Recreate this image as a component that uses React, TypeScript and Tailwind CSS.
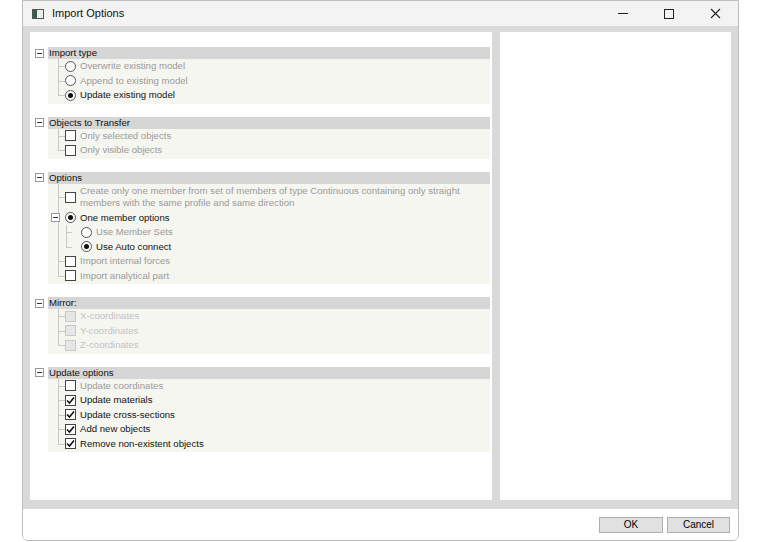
import React from "react";

type Item = { label: string; kind: "radio" | "check"; on?: boolean; dim?: boolean; disabled?: boolean; lines?: number; level?: number };

function Mark({ kind, on, disabled }: { kind: string; on?: boolean; disabled?: boolean }) {
  if (kind === "radio")
    return (
      <span className="w-[11px] h-[11px] rounded-full border border-[#555] bg-white flex items-center justify-center shrink-0">
        {on && <span className="w-[5px] h-[5px] rounded-full bg-[#111]" />}
      </span>
    );
  return (
    <span className={`w-[11px] h-[11px] border flex items-center justify-center shrink-0 ${disabled ? "border-[#c8c8c8] bg-[#e6e6e6]" : "border-[#444] bg-white"}`}>
      {on && (
        <svg width="9" height="9" viewBox="0 0 9 9">
          <path d="M1 4.5 L3.5 7 L8 1.5" stroke="#111" strokeWidth="1.6" fill="none" />
        </svg>
      )}
    </span>
  );
}

function Row({ it, last }: { it: Item; last: boolean }) {
  const lvl = it.level ?? 0;
  const h = it.lines === 2 ? "h-[27px]" : "h-[14.5px]";
  return (
    <div className={`flex ${h}`}>
      <div className="w-[7px] ml-[10px] shrink-0 relative">
        <div className={`absolute left-0 top-0 border-l border-[#c8c8c8] ${last ? "h-1/2" : "h-full"}`} />
        {lvl === 0 && <div className="absolute left-0 top-1/2 w-[7px] border-t border-[#c8c8c8]" />}
      </div>
      {lvl === 1 && (
        <div className="w-[15px] ml-[1px] shrink-0 relative">
          <div className={`absolute left-0 top-0 border-l border-[#c8c8c8] ${it.label === "Use Auto connect" ? "h-1/2" : "h-full"}`} />
          <div className="absolute left-0 top-1/2 w-[6px] border-t border-[#c8c8c8]" />
        </div>
      )}
      <div className="flex items-center gap-[4px] h-full whitespace-nowrap">
        <Mark kind={it.kind} on={it.on} disabled={it.disabled} />
        <span className={`leading-[12px] ${it.disabled ? "text-[#c2c2c2]" : it.dim ? "text-[#9a9a9a]" : "text-[#111]"}`}>
          {it.lines === 2 ? (
            <>Create only one member from set of members of type Continuous containing only straight<br />members with the same profile and same direction</>
          ) : it.label}
        </span>
      </div>
    </div>
  );
}

function OneMember() {
  return (
    <div className="flex h-[14.5px] relative">
      <div className="w-[7px] ml-[10px] shrink-0 relative">
        <div className="absolute left-0 top-0 border-l border-[#c8c8c8] h-full" />
      </div>
      <div className="absolute left-[3px] top-[2.5px] w-[9px] h-[9px] border border-[#999] bg-white flex items-center justify-center">
        <span className="w-[5px] border-t border-[#333]" />
      </div>
      <div className="flex items-center gap-[4px] h-full whitespace-nowrap">
        <Mark kind="radio" on />
        <span className="text-[#111]">One member options</span>
      </div>
    </div>
  );
}

function Section({ title, items }: { title: string; items: (Item | "one")[] }) {
  return (
    <div className="mb-[13px]">
      <div className="flex items-center h-[12px]">
        <div className="w-[9px] h-[9px] border border-[#999] bg-white flex items-center justify-center ml-[4px] mr-[4px]">
          <span className="w-[5px] border-t border-[#333]" />
        </div>
        <div className="flex-1 h-full bg-[#d6d6d6] text-[#111] leading-[12px] pl-[1px]">{title}</div>
      </div>
      <div className="ml-[17px] bg-[#f6f6f0] pb-[1px]">
        {items.map((it, i) =>
          it === "one" ? <OneMember key={i} /> : <Row key={i} it={it} last={i === items.length - 1} />
        )}
      </div>
    </div>
  );
}

export default function App() {
  return (
    <div className="w-[760px] h-[542px] bg-white relative" style={{ fontFamily: '"Liberation Sans", Arial, sans-serif' }}>
      <div className="absolute left-[22px] top-0 w-[717px] h-[541px] border border-[#bdbdbd] rounded-b-[6px] flex flex-col text-[9.6px] overflow-hidden">
        <div className="h-[25px] bg-[#f3f3f3] flex items-center text-[11px] text-[#111]">
          <span className="ml-[9px] w-[12px] h-[10px] border border-[#555] bg-[#e8f0e8] flex">
            <span className="w-[4px] bg-[#2f5f4f]" />
          </span>
          <span className="ml-[8px]">Import Options</span>
          <div className="ml-auto flex items-center text-[#222]">
            <span className="w-[46px] flex justify-center"><span className="w-[10px] border-t border-[#222]" /></span>
            <span className="w-[46px] flex justify-center"><span className="w-[10px] h-[10px] border border-[#222]" /></span>
            <span className="w-[46px] flex justify-center">
              <svg width="11" height="11" viewBox="0 0 11 11"><path d="M1 1L10 10M10 1L1 10" stroke="#222" strokeWidth="1.1" /></svg>
            </span>
          </div>
        </div>
        <div className="flex-1 bg-[#d9d9d9] flex gap-[8px] px-[7px] pt-[6px] pb-[9px]">
          <div className="w-[462px] bg-white pt-[15px] pl-[1px] pr-[2px]">
            <Section title="Import type" items={[
              { label: "Overwrite existing model", kind: "radio", dim: true },
              { label: "Append to existing model", kind: "radio", dim: true },
              { label: "Update existing model", kind: "radio", on: true },
            ]} />
            <Section title="Objects to Transfer" items={[
              { label: "Only selected objects", kind: "check", dim: true },
              { label: "Only visible objects", kind: "check", dim: true },
            ]} />
            <Section title="Options" items={[
              { label: "", kind: "check", dim: true, lines: 2 },
              "one",
              { label: "Use Member Sets", kind: "radio", dim: true, level: 1 },
              { label: "Use Auto connect", kind: "radio", on: true, level: 1 },
              { label: "Import internal forces", kind: "check", dim: true },
              { label: "Import analytical part", kind: "check", dim: true },
            ]} />
            <Section title="Mirror:" items={[
              { label: "X-coordinates", kind: "check", disabled: true },
              { label: "Y-coordinates", kind: "check", disabled: true },
              { label: "Z-coordinates", kind: "check", disabled: true },
            ]} />
            <Section title="Update options" items={[
              { label: "Update coordinates", kind: "check", dim: true },
              { label: "Update materials", kind: "check", on: true },
              { label: "Update cross-sections", kind: "check", on: true },
              { label: "Add new objects", kind: "check", on: true },
              { label: "Remove non-existent objects", kind: "check", on: true },
            ]} />
          </div>
          <div className="flex-1 bg-white" />
        </div>
        <div className="h-[31px] bg-white flex items-center justify-end gap-[4px] pr-[8px]">
          <button className="w-[64px] h-[16px] border border-[#adadad] bg-[#e1e1e1] text-[10px] leading-[14px]">OK</button>
          <button className="w-[63px] h-[16px] border border-[#adadad] bg-[#e1e1e1] text-[10px] leading-[14px]">Cancel</button>
        </div>
      </div>
    </div>
  );
}
